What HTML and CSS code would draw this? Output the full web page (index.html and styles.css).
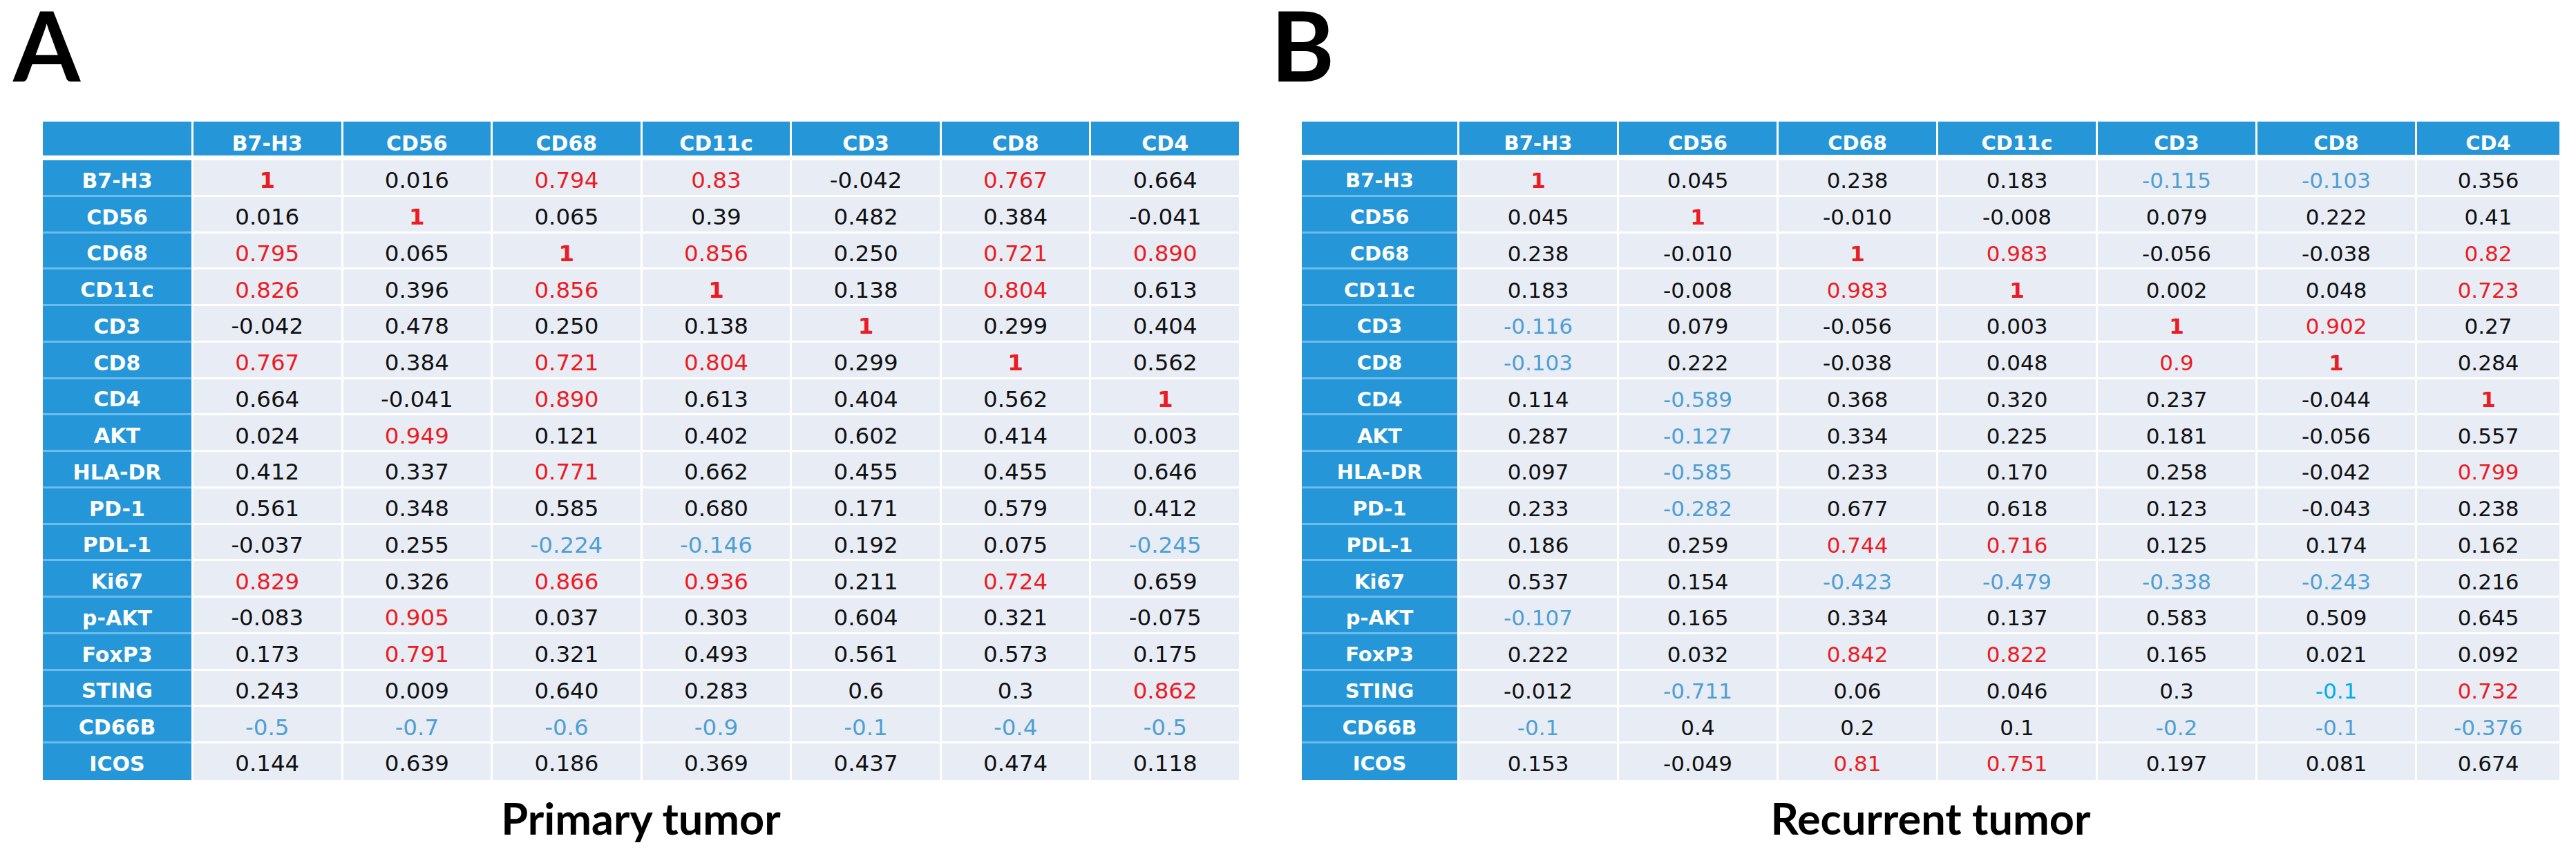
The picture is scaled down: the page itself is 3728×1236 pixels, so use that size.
FILE: index.html
```html
<!DOCTYPE html>
<html>
<head>
<meta charset="utf-8">
<link rel="stylesheet" href="styles.css">
</head>
<body>
<div class="figure">
  <section class="panel panel-a">
    <div class="letter">A</div>
    <div class="table table-a">
      <div class="thead">
        <div class="hc"></div><div class="hc">B7-H3</div><div class="hc">CD56</div><div class="hc">CD68</div><div class="hc">CD11c</div><div class="hc">CD3</div><div class="hc">CD8</div><div class="hc">CD4</div>
      </div>
      <div class="tbody">
        <div class="rh">B7-H3</div><div class="v one">1</div><div class="v">0.016</div><div class="v r">0.794</div><div class="v r">0.83</div><div class="v">-0.042</div><div class="v r">0.767</div><div class="v">0.664</div>
        <div class="rh">CD56</div><div class="v">0.016</div><div class="v one">1</div><div class="v">0.065</div><div class="v">0.39</div><div class="v">0.482</div><div class="v">0.384</div><div class="v">-0.041</div>
        <div class="rh">CD68</div><div class="v r">0.795</div><div class="v">0.065</div><div class="v one">1</div><div class="v r">0.856</div><div class="v">0.250</div><div class="v r">0.721</div><div class="v r">0.890</div>
        <div class="rh">CD11c</div><div class="v r">0.826</div><div class="v">0.396</div><div class="v r">0.856</div><div class="v one">1</div><div class="v">0.138</div><div class="v r">0.804</div><div class="v">0.613</div>
        <div class="rh">CD3</div><div class="v">-0.042</div><div class="v">0.478</div><div class="v">0.250</div><div class="v">0.138</div><div class="v one">1</div><div class="v">0.299</div><div class="v">0.404</div>
        <div class="rh">CD8</div><div class="v r">0.767</div><div class="v">0.384</div><div class="v r">0.721</div><div class="v r">0.804</div><div class="v">0.299</div><div class="v one">1</div><div class="v">0.562</div>
        <div class="rh">CD4</div><div class="v">0.664</div><div class="v">-0.041</div><div class="v r">0.890</div><div class="v">0.613</div><div class="v">0.404</div><div class="v">0.562</div><div class="v one">1</div>
        <div class="rh">AKT</div><div class="v">0.024</div><div class="v r">0.949</div><div class="v">0.121</div><div class="v">0.402</div><div class="v">0.602</div><div class="v">0.414</div><div class="v">0.003</div>
        <div class="rh">HLA-DR</div><div class="v">0.412</div><div class="v">0.337</div><div class="v r">0.771</div><div class="v">0.662</div><div class="v">0.455</div><div class="v">0.455</div><div class="v">0.646</div>
        <div class="rh">PD-1</div><div class="v">0.561</div><div class="v">0.348</div><div class="v">0.585</div><div class="v">0.680</div><div class="v">0.171</div><div class="v">0.579</div><div class="v">0.412</div>
        <div class="rh">PDL-1</div><div class="v">-0.037</div><div class="v">0.255</div><div class="v b">-0.224</div><div class="v b">-0.146</div><div class="v">0.192</div><div class="v">0.075</div><div class="v b">-0.245</div>
        <div class="rh">Ki67</div><div class="v r">0.829</div><div class="v">0.326</div><div class="v r">0.866</div><div class="v r">0.936</div><div class="v">0.211</div><div class="v r">0.724</div><div class="v">0.659</div>
        <div class="rh">p-AKT</div><div class="v">-0.083</div><div class="v r">0.905</div><div class="v">0.037</div><div class="v">0.303</div><div class="v">0.604</div><div class="v">0.321</div><div class="v">-0.075</div>
        <div class="rh">FoxP3</div><div class="v">0.173</div><div class="v r">0.791</div><div class="v">0.321</div><div class="v">0.493</div><div class="v">0.561</div><div class="v">0.573</div><div class="v">0.175</div>
        <div class="rh">STING</div><div class="v">0.243</div><div class="v">0.009</div><div class="v">0.640</div><div class="v">0.283</div><div class="v">0.6</div><div class="v">0.3</div><div class="v r">0.862</div>
        <div class="rh">CD66B</div><div class="v b">-0.5</div><div class="v b">-0.7</div><div class="v b">-0.6</div><div class="v b">-0.9</div><div class="v b">-0.1</div><div class="v b">-0.4</div><div class="v b">-0.5</div>
        <div class="rh last">ICOS</div><div class="v last">0.144</div><div class="v last">0.639</div><div class="v last">0.186</div><div class="v last">0.369</div><div class="v last">0.437</div><div class="v last">0.474</div><div class="v last">0.118</div>
      </div>
    </div>
    <div class="caption caption-a">Primary tumor</div>
  </section>

  <section class="panel panel-b">
    <div class="letter">B</div>
    <div class="table table-b">
      <div class="thead">
        <div class="hc"></div><div class="hc">B7-H3</div><div class="hc">CD56</div><div class="hc">CD68</div><div class="hc">CD11c</div><div class="hc">CD3</div><div class="hc">CD8</div><div class="hc">CD4</div>
      </div>
      <div class="tbody">
        <div class="rh">B7-H3</div><div class="v one">1</div><div class="v">0.045</div><div class="v">0.238</div><div class="v">0.183</div><div class="v b">-0.115</div><div class="v b">-0.103</div><div class="v">0.356</div>
        <div class="rh">CD56</div><div class="v">0.045</div><div class="v one">1</div><div class="v">-0.010</div><div class="v">-0.008</div><div class="v">0.079</div><div class="v">0.222</div><div class="v">0.41</div>
        <div class="rh">CD68</div><div class="v">0.238</div><div class="v">-0.010</div><div class="v one">1</div><div class="v r">0.983</div><div class="v">-0.056</div><div class="v">-0.038</div><div class="v r">0.82</div>
        <div class="rh">CD11c</div><div class="v">0.183</div><div class="v">-0.008</div><div class="v r">0.983</div><div class="v one">1</div><div class="v">0.002</div><div class="v">0.048</div><div class="v r">0.723</div>
        <div class="rh">CD3</div><div class="v b">-0.116</div><div class="v">0.079</div><div class="v">-0.056</div><div class="v">0.003</div><div class="v one">1</div><div class="v r">0.902</div><div class="v">0.27</div>
        <div class="rh">CD8</div><div class="v b">-0.103</div><div class="v">0.222</div><div class="v">-0.038</div><div class="v">0.048</div><div class="v r">0.9</div><div class="v one">1</div><div class="v">0.284</div>
        <div class="rh">CD4</div><div class="v">0.114</div><div class="v b">-0.589</div><div class="v">0.368</div><div class="v">0.320</div><div class="v">0.237</div><div class="v">-0.044</div><div class="v one">1</div>
        <div class="rh">AKT</div><div class="v">0.287</div><div class="v b">-0.127</div><div class="v">0.334</div><div class="v">0.225</div><div class="v">0.181</div><div class="v">-0.056</div><div class="v">0.557</div>
        <div class="rh">HLA-DR</div><div class="v">0.097</div><div class="v b">-0.585</div><div class="v">0.233</div><div class="v">0.170</div><div class="v">0.258</div><div class="v">-0.042</div><div class="v r">0.799</div>
        <div class="rh">PD-1</div><div class="v">0.233</div><div class="v b">-0.282</div><div class="v">0.677</div><div class="v">0.618</div><div class="v">0.123</div><div class="v">-0.043</div><div class="v">0.238</div>
        <div class="rh">PDL-1</div><div class="v">0.186</div><div class="v">0.259</div><div class="v r">0.744</div><div class="v r">0.716</div><div class="v">0.125</div><div class="v">0.174</div><div class="v">0.162</div>
        <div class="rh">Ki67</div><div class="v">0.537</div><div class="v">0.154</div><div class="v b">-0.423</div><div class="v b">-0.479</div><div class="v b">-0.338</div><div class="v b">-0.243</div><div class="v">0.216</div>
        <div class="rh">p-AKT</div><div class="v b">-0.107</div><div class="v">0.165</div><div class="v">0.334</div><div class="v">0.137</div><div class="v">0.583</div><div class="v">0.509</div><div class="v">0.645</div>
        <div class="rh">FoxP3</div><div class="v">0.222</div><div class="v">0.032</div><div class="v r">0.842</div><div class="v r">0.822</div><div class="v">0.165</div><div class="v">0.021</div><div class="v">0.092</div>
        <div class="rh">STING</div><div class="v">-0.012</div><div class="v b">-0.711</div><div class="v">0.06</div><div class="v">0.046</div><div class="v">0.3</div><div class="v c">-0.1</div><div class="v r">0.732</div>
        <div class="rh">CD66B</div><div class="v b">-0.1</div><div class="v">0.4</div><div class="v">0.2</div><div class="v">0.1</div><div class="v b">-0.2</div><div class="v b">-0.1</div><div class="v b">-0.376</div>
        <div class="rh last">ICOS</div><div class="v last">0.153</div><div class="v last">-0.049</div><div class="v last r">0.81</div><div class="v last r">0.751</div><div class="v last">0.197</div><div class="v last">0.081</div><div class="v last">0.674</div>
      </div>
    </div>
    <div class="caption caption-b">Recurrent tumor</div>
  </section>
</div>
</body>
</html>
```

FILE: styles.css
```css
html, body {
  margin: 0;
  padding: 0;
  background: #ffffff;
}

.figure {
  display: flex;
  align-items: flex-start;
  width: 3728px;
  height: 1236px;
  overflow: hidden;
}

.panel {
  display: flex;
  flex-direction: column;
}

.panel-a {
  padding-left: 19px;
}

.panel-b {
  margin-left: 46px;
}

.letter {
  font-family: "Lato", "Liberation Sans", sans-serif;
  font-weight: 700;
  font-size: 140px;
  line-height: 128px;
  height: 128px;
  color: #000;
}

.table {
  margin-top: 48px;
  display: flex;
  flex-direction: column;
  font-family: "DejaVu Sans", "Liberation Sans", sans-serif;
}

.table-a {
  margin-left: 43px;
  width: 1731px;
}

.table-b {
  margin-left: 45px;
  width: 1820px;
}

.thead,
.tbody {
  display: grid;
  column-gap: 3px;
}

.table-a .thead,
.table-a .tbody {
  grid-template-columns: 215px repeat(7, 1fr);
}

.table-b .thead,
.table-b .tbody {
  grid-template-columns: 225px repeat(6, 228px) 206px;
}

.thead {
  height: 44px;
}

.tbody {
  margin-top: 12px;
  grid-auto-rows: 52.75px;
}

.hc {
  background: #2596d8;
  color: #ffffff;
  font-weight: 700;
  display: flex;
  align-items: center;
  justify-content: center;
  padding-top: 14px;
  box-sizing: border-box;
}

.rh {
  background: #2596d8;
  color: #ffffff;
  font-weight: 700;
  border-bottom: 3px solid #6cbdeb;
}

.v {
  background: #e8edf5;
  border-bottom: 3px solid #ffffff;
  color: #111111;
}

.rh, .v {
  display: flex;
  align-items: center;
  justify-content: center;
  padding-top: 9px;
  box-sizing: border-box;
}

.rh.last, .v.last {
  border-bottom: none;
  padding-top: 6px;
}

.table-a .hc, .table-a .rh {
  font-size: 30px;
}

.table-a .v {
  font-size: 32.5px;
}

.table-b .hc, .table-b .rh {
  font-size: 29px;
}

.table-b .v {
  font-size: 31px;
}

.v.r {
  color: #ec1c24;
}

.v.one {
  color: #ec1c24;
  font-weight: 700;
}

.v.b {
  color: #4f9fd3;
}

.v.c {
  color: #00aee8;
}

.caption {
  font-family: "Lato", "Liberation Sans", sans-serif;
  font-weight: 700;
  font-size: 63px;
  line-height: 110px;
  text-align: center;
  color: #000;
}

.caption-a {
  margin-left: 43px;
  width: 1731px;
}

.caption-b {
  margin-left: 45px;
  width: 1820px;
}
```
